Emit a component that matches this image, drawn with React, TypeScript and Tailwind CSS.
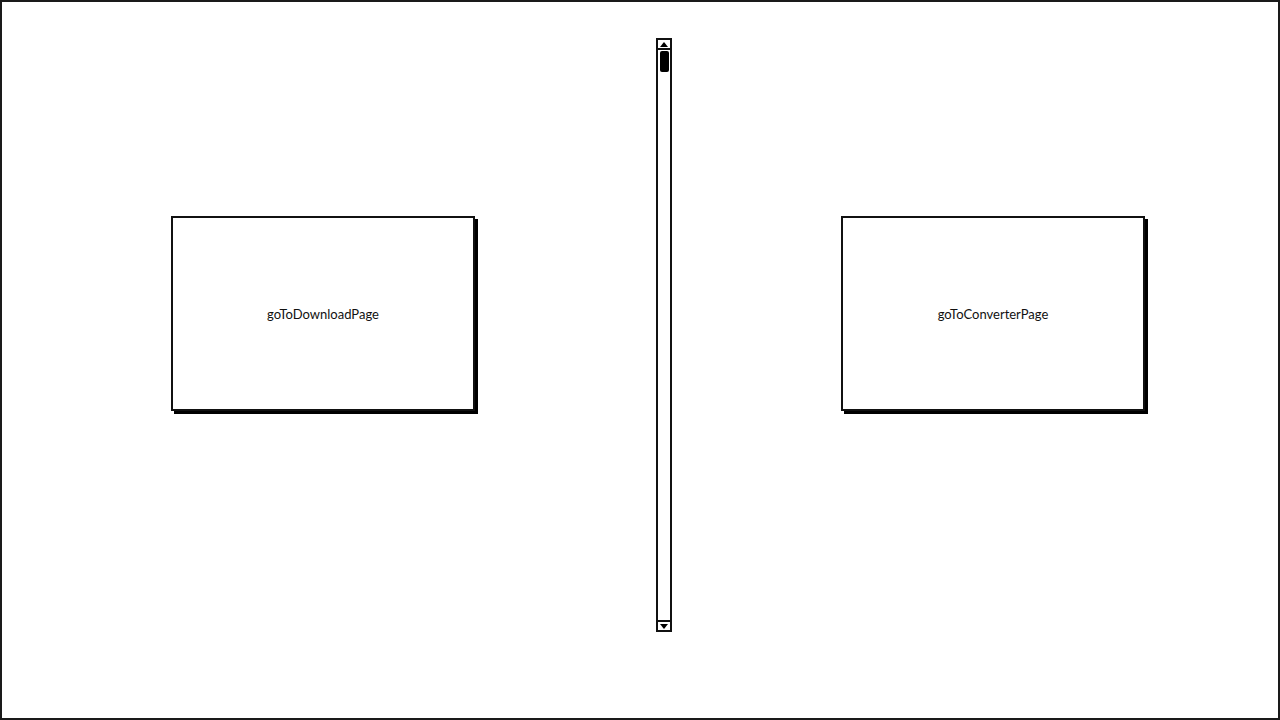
import React from 'react';

const BigButton: React.FC<{ label: string; className?: string }> = ({ label, className }) => (
  <button
    className={`w-[304px] h-[195px] bg-white border-2 border-[#111] shadow-[3px_3px_0_#000] flex items-center justify-center pt-[2px] text-[13px] text-[#111] ${className ?? ''}`}
    style={{ fontFamily: 'Lato, "Liberation Sans", sans-serif' }}
  >
    {label}
  </button>
);

const ScrollBar: React.FC = () => (
  <div className="w-[16px] h-[594px] mt-[36px] ml-[181px] border-2 border-[#111] bg-white flex flex-col">
    {/* up arrow */}
    <div className="h-[10px] border-b-2 border-[#111] flex items-center justify-center">
      <div className="w-0 h-0 border-l-[4px] border-r-[4px] border-b-[5px] border-l-transparent border-r-transparent border-b-black" />
    </div>
    {/* thumb */}
    <div className="flex-1 px-[1px] pt-[1px]">
      <div className="w-[9px] h-[21px] mx-auto rounded-[2px] bg-black" />
    </div>
    {/* down arrow */}
    <div className="h-[10px] border-t-2 border-[#111] flex items-center justify-center">
      <div className="w-0 h-0 border-l-[4px] border-r-[4px] border-t-[5px] border-l-transparent border-r-transparent border-t-black" />
    </div>
  </div>
);

export default function App() {
  return (
    <div className="w-[1280px] h-[720px] bg-white border-2 border-[#1a1a1a] flex items-start overflow-hidden">
      <BigButton label="goToDownloadPage" className="ml-[169px] mt-[214px]" />
      <ScrollBar />
      <BigButton label="goToConverterPage" className="ml-[169px] mt-[214px]" />
    </div>
  );
}
